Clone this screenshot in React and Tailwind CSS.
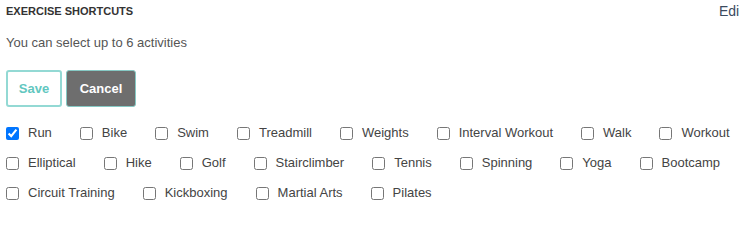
import React, { useState } from "react";

// Activities offered as shortcuts
const ACTIVITIES = [
  "Run", "Bike", "Swim", "Treadmill", "Weights", "Interval Workout", "Walk", "Workout",
  "Elliptical", "Hike", "Golf", "Stairclimber", "Tennis", "Spinning", "Yoga", "Bootcamp",
  "Circuit Training", "Kickboxing", "Martial Arts", "Pilates",
];

const App = () => {
  const [selected, setSelected] = useState(["Run"]);

  const toggle = (name) => {
    setSelected((prev) =>
      prev.includes(name) ? prev.filter((n) => n !== name) : prev.length < 6 ? [...prev, name] : prev
    );
  };

  return (
    <div className="w-full overflow-hidden bg-white" style={{ fontFamily: "'Liberation Sans', Arial, sans-serif" }}>
      <div className="w-[743px] pl-[6px]">
        <div className="flex justify-between pt-[4px]">
          <h2 className="text-[11px] leading-[14px] font-bold text-[#333]">EXERCISE SHORTCUTS</h2>
          <a className="text-[14px] leading-[16px] text-[#3b4a5e] -mt-[1px]">Edit</a>
        </div>
        <p className="mt-[16px] text-[13px] leading-[16px] text-[#555]">You can select up to 6 activities</p>
        <div className="mt-[19px] flex gap-[4px]">
          <button className="h-[37px] w-[56px] rounded-[3px] border-2 border-[#93d9d4] bg-white text-[13px] font-bold text-[#62c7c0]">
            Save
          </button>
          <button className="h-[37px] w-[70px] rounded-[3px] border border-[#86c9c4] bg-[#6e6e6e] text-[13px] font-bold text-white">
            Cancel
          </button>
        </div>
        <div className="mt-[11px] flex flex-wrap gap-x-[28px]">
          {ACTIVITIES.map((name) => (
            <label key={name} className="flex h-[30px] items-center cursor-pointer">
              <input
                type="checkbox"
                checked={selected.includes(name)}
                onChange={() => toggle(name)}
                className="m-0 h-[13px] w-[13px]"
              />
              <span className="ml-[9px] text-[13px] leading-[16px] text-[#444]">{name}</span>
            </label>
          ))}
        </div>
      </div>
    </div>
  );
};

export default App;
